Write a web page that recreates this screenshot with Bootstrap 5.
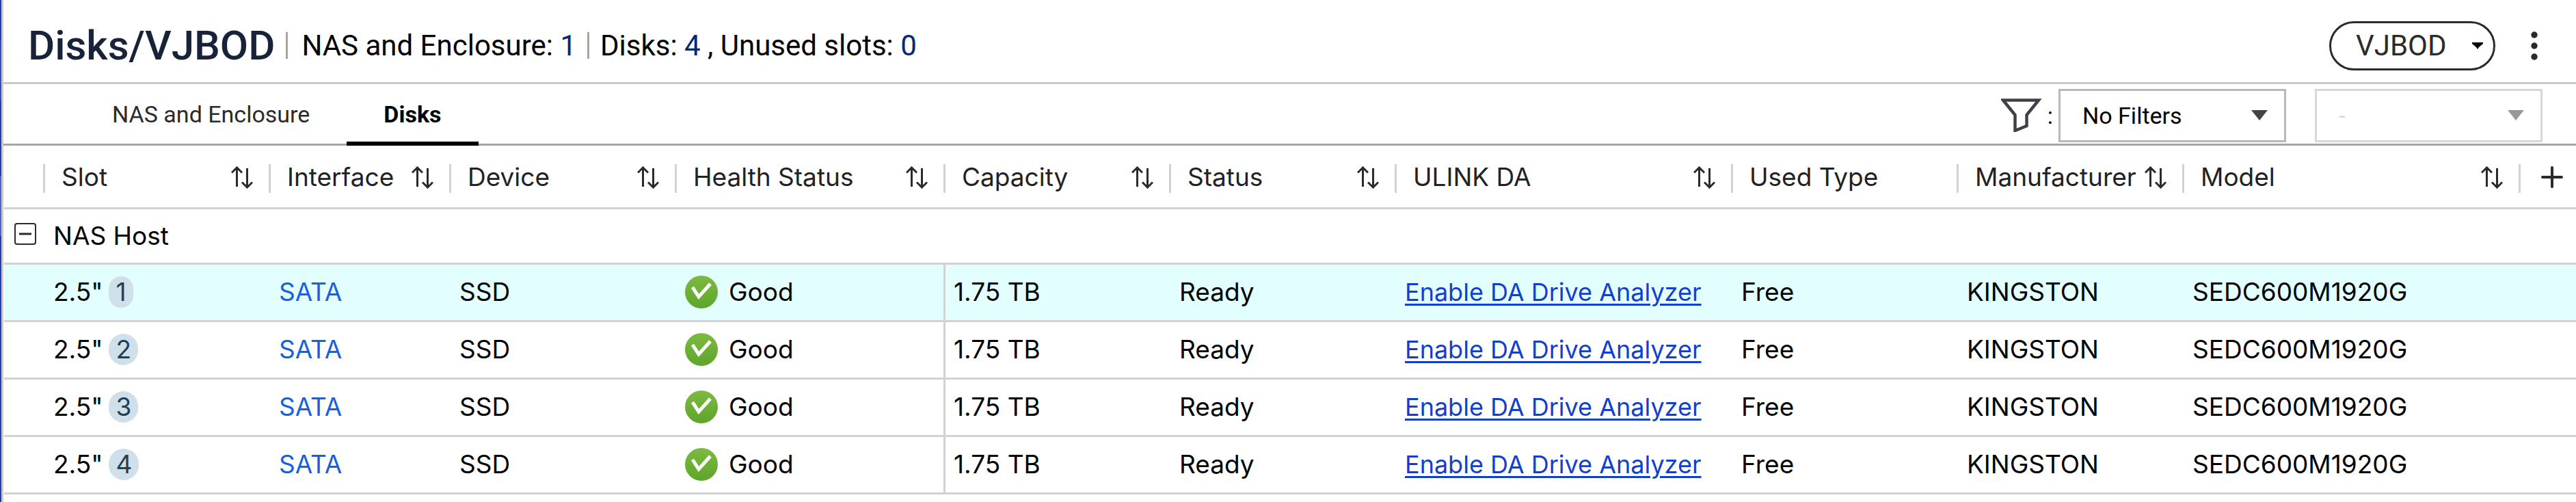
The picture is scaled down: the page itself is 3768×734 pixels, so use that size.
<!DOCTYPE html>
<html lang="en">
<head>
<meta charset="utf-8">
<meta name="viewport" content="width=device-width, initial-scale=1">
<title>Disks/VJBOD</title>
<link href="https://cdn.jsdelivr.net/npm/bootstrap@5.3.0/dist/css/bootstrap.min.css" rel="stylesheet">
<style>
  body { background: #fff; color: #000; font-family: Roboto, sans-serif; font-size: 42px; line-height: 54px; }
  button, select { font-family: inherit; }
  .desk-edge { flex: none; width: 2px; background: linear-gradient(#1f3fb8 0 8%, #3150c0 8% 20%, #1f3fb0 20% 35%, #4f68c6 35% 47%, #2341ae 47%); }
  .app-window { border-left: 3px solid #cdcdd1; min-height: 100vh; }

  .app-header { min-height: 123px; padding: 13px 52px 0 36px; border-bottom: 3px solid #c9c9c9; }
  .app-title { font-size: 60px; font-weight: 500; line-height: 72px; color: #18233a; }
  .rule { width: 3px; height: 39px; background: #aaa797; }
  .count { color: #002a75; }
  .pill { width: 243px; height: 72px; padding: 0 15px 0 36px; border: 3px solid #2b2b2b; border-radius: 36px; background: #fff; color: #2b2b2b; }
  .bare { border: 0; padding: 0; background: none; }

  .tab-bar { min-height: 90px; padding: 0 49px 0 105px; border-bottom: 3px solid #a5a5a5; font-size: 34px; line-height: 42px; }
  .view-tab { padding: 4px 54px 0; margin-bottom: -3px; border-bottom: 6px solid transparent; color: #2b2b2b; text-decoration: none; }
  .view-tab.active { color: #000; font-weight: 700; border-color: #000; }
  .filter-box { width: 333px; height: 78px; padding: 0 60px 0 32px; border: 3px solid #b8b8b8; border-radius: 0; appearance: none; color: #000; opacity: 1;
    background: #fff url("data:image/svg+xml,%3Csvg xmlns='http://www.w3.org/2000/svg' viewBox='0 0 24 15'%3E%3Cpath d='M0 0h24L12 15z' fill='%23444'/%3E%3C/svg%3E") no-repeat right 24px center / 24px 15px; }
  .filter-box + .filter-box { margin-left: 42px; }
  .filter-box:disabled { opacity: .55; color: #bbb; }

  .disk-table { table-layout: fixed; width: calc(100% - 1px); margin-left: 1px; border-collapse: separate; border-spacing: 0; font-family: Inter, sans-serif; font-size: 37px; line-height: 48px; }
  .disk-table th { height: 93px; padding: 6px 0 0; font-weight: 400; color: #222; border-bottom: 3px solid #d2d2d2; }
  .disk-table td { height: 84px; padding: 0 0 2px 15px; border-bottom: 3px solid #d2d2d2; white-space: nowrap; }
  .disk-table .group td { height: 81px; padding-bottom: 0; }
  .disk-table .chosen td { background: #e2fefe; }
  .disk-table td.divide { border-left: 3px solid #d2d2d2; padding-left: 12px; }
  .head-cell { height: 42px; padding: 0 23px 4px 24px; border-left: 3px solid #d2d2d2; }
  .c-edge { width: 57px; } .c-std { width: 330px; } .c-if { width: 264px; }
  .c-health { width: 393px; } .c-da { width: 492px; } .c-add { width: 84px; }
  .slot-no { display: inline-block; margin-left: 9px; padding: 0 10px; line-height: 46px; border-radius: 23px; background: #cfe0eb; color: #1d4257; }
  .iface { color: #1462dc; text-decoration: none; }
  .da-link { color: #1240cc; font-size: 36px; text-decoration: underline; text-decoration-thickness: 3px; text-underline-offset: 4px; }
  svg { display: block; flex: none; }
</style>
</head>
<body>
<svg width="0" height="0" class="position-absolute" aria-hidden="true">
  <defs>
    <linearGradient id="green" x1="0" y1="0" x2="0" y2="1"><stop offset="0" stop-color="#7dba42"/><stop offset="1" stop-color="#5ea52a"/></linearGradient>
    <symbol id="sort" viewBox="0 0 32 33"><path d="M8.500 30V2M1 9.500l7.500-7.500 7.500 7.500M23.500 3v28M16 23.500l7.500 7.500 7.500-7.500" fill="none" stroke="#2b2b2b" stroke-width="3"/></symbol>
    <symbol id="good" viewBox="0 0 48 48"><circle cx="24" cy="24" r="24" fill="url(#green)"/><path d="M11 17l9 14L37 12" fill="none" stroke="#fff" stroke-width="5"/></symbol>
  </defs>
</svg>
<div class="d-flex align-items-stretch">
  <div class="desk-edge"></div>
  <main class="app-window flex-grow-1">
    <header class="app-header d-flex align-items-center">
      <h1 class="app-title mb-0">Disks/VJBOD</h1>
      <span class="rule mx-3"></span>
      <span class="ms-1">NAS and Enclosure: <span class="count">1</span></span>
      <span class="rule mx-3"></span>
      <span>Disks: <span class="count">4</span> , Unused slots: <span class="count">0</span></span>
      <button type="button" class="pill ms-auto d-flex align-items-center justify-content-between">VJBOD
        <svg width="16" height="10" viewBox="0 0 16 10"><path d="M0 0h16v2l-6 5-2 3-2-3-6-5z" fill="#000"/></svg>
      </button>
      <button type="button" class="bare ms-5" aria-label="More">
        <svg width="18" height="44" viewBox="0 0 18 44" fill="#2b2b2b"><circle cx="9" cy="6" r="4.700"/><circle cx="9" cy="22" r="4.700"/><circle cx="9" cy="38" r="4.700"/></svg>
      </button>
    </header>

    <div class="tab-bar d-flex align-items-stretch">
      <nav class="d-flex">
        <a href="#" class="view-tab d-flex align-items-center">NAS and Enclosure</a>
        <a href="#" class="view-tab active d-flex align-items-center" aria-current="page">Disks</a>
      </nav>
      <div class="ms-auto d-flex align-items-center pt-1">
        <label for="filter" class="d-flex align-items-center me-2">
          <svg class="me-2" width="60" height="49" viewBox="0 0 60 49"><path d="M3 2.500h52L37.500 24v16L20.500 47V24z" fill="#fff" stroke="#3f4148" stroke-width="4.500"/></svg>:
        </label>
        <select id="filter" class="filter-box"><option>No Filters</option></select>
        <select class="filter-box" aria-label="Filter value" disabled><option>-</option></select>
      </div>
    </div>

    <table class="disk-table">
      <colgroup><col class="c-edge"><col class="c-std"><col class="c-if"><col class="c-std"><col class="c-health"><col class="c-std"><col class="c-std"><col class="c-da"><col class="c-std"><col class="c-std"><col><col class="c-add"></colgroup>
      <thead>
        <tr>
          <th></th>
          <th><div class="head-cell d-flex align-items-center justify-content-between">Slot<svg width="32" height="33"><use href="#sort"/></svg></div></th>
          <th><div class="head-cell d-flex align-items-center justify-content-between">Interface<svg width="32" height="33"><use href="#sort"/></svg></div></th>
          <th><div class="head-cell d-flex align-items-center justify-content-between">Device<svg width="32" height="33"><use href="#sort"/></svg></div></th>
          <th><div class="head-cell d-flex align-items-center justify-content-between">Health Status<svg width="32" height="33"><use href="#sort"/></svg></div></th>
          <th><div class="head-cell d-flex align-items-center justify-content-between">Capacity<svg width="32" height="33"><use href="#sort"/></svg></div></th>
          <th><div class="head-cell d-flex align-items-center justify-content-between">Status<svg width="32" height="33"><use href="#sort"/></svg></div></th>
          <th><div class="head-cell d-flex align-items-center justify-content-between">ULINK DA<svg width="32" height="33"><use href="#sort"/></svg></div></th>
          <th><div class="head-cell d-flex align-items-center">Used Type</div></th>
          <th><div class="head-cell d-flex align-items-center justify-content-between">Manufacturer<svg width="32" height="33"><use href="#sort"/></svg></div></th>
          <th><div class="head-cell d-flex align-items-center justify-content-between">Model<svg width="32" height="33"><use href="#sort"/></svg></div></th>
          <th><div class="head-cell d-flex align-items-center"><button type="button" class="bare ms-1" aria-label="Add column"><svg width="36" height="32" viewBox="0 0 36 32"><path d="M4 16h28M18 2v28" stroke="#2b2b2b" stroke-width="4" stroke-linecap="round"/></svg></button></div></th>
        </tr>
      </thead>
      <tbody>
        <tr class="group">
          <td class="pe-0"><button type="button" class="bare" aria-label="Collapse NAS Host"><svg width="32" height="32" viewBox="0 0 32 32"><rect x="1" y="1" width="30" height="30" rx="3" fill="#fff" stroke="#2b2b2b" stroke-width="2"/><path d="M7 16h18" stroke="#2b2b2b" stroke-width="3"/></svg></button></td>
          <td colspan="11">NAS Host</td>
        </tr>
        <tr class="chosen">
          <td></td><td>2.5"<span class="slot-no">1</span></td><td><a href="#" class="iface">SATA</a></td><td>SSD</td>
          <td><div class="d-flex align-items-center"><svg class="me-3" width="48" height="48"><use href="#good"/></svg>Good</div></td>
          <td class="divide">1.75 TB</td><td>Ready</td><td><a href="#" class="da-link">Enable DA Drive Analyzer</a></td><td>Free</td><td>KINGSTON</td><td>SEDC600M1920G</td><td></td>
        </tr>
        <tr>
          <td></td><td>2.5"<span class="slot-no">2</span></td><td><a href="#" class="iface">SATA</a></td><td>SSD</td>
          <td><div class="d-flex align-items-center"><svg class="me-3" width="48" height="48"><use href="#good"/></svg>Good</div></td>
          <td class="divide">1.75 TB</td><td>Ready</td><td><a href="#" class="da-link">Enable DA Drive Analyzer</a></td><td>Free</td><td>KINGSTON</td><td>SEDC600M1920G</td><td></td>
        </tr>
        <tr>
          <td></td><td>2.5"<span class="slot-no">3</span></td><td><a href="#" class="iface">SATA</a></td><td>SSD</td>
          <td><div class="d-flex align-items-center"><svg class="me-3" width="48" height="48"><use href="#good"/></svg>Good</div></td>
          <td class="divide">1.75 TB</td><td>Ready</td><td><a href="#" class="da-link">Enable DA Drive Analyzer</a></td><td>Free</td><td>KINGSTON</td><td>SEDC600M1920G</td><td></td>
        </tr>
        <tr>
          <td></td><td>2.5"<span class="slot-no">4</span></td><td><a href="#" class="iface">SATA</a></td><td>SSD</td>
          <td><div class="d-flex align-items-center"><svg class="me-3" width="48" height="48"><use href="#good"/></svg>Good</div></td>
          <td class="divide">1.75 TB</td><td>Ready</td><td><a href="#" class="da-link">Enable DA Drive Analyzer</a></td><td>Free</td><td>KINGSTON</td><td>SEDC600M1920G</td><td></td>
        </tr>
      </tbody>
    </table>
  </main>
</div>
<script src="https://cdn.jsdelivr.net/npm/bootstrap@5.3.0/dist/js/bootstrap.bundle.min.js"></script>
</body>
</html>
